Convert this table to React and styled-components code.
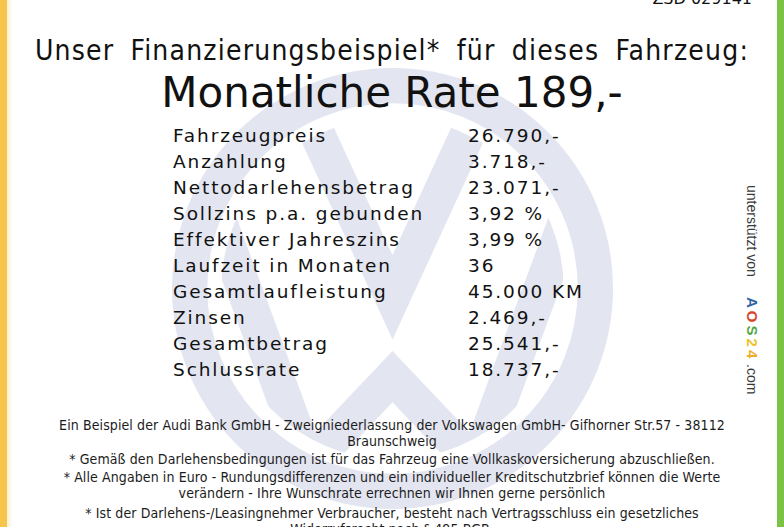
import React from "react";
import styled, { createGlobalStyle } from "styled-components";

const GlobalStyle = createGlobalStyle`
  html, body {
    margin: 0;
    padding: 0;
    background: #fff;
  }
  body {
    font-family: "DejaVu Sans", "Liberation Sans", sans-serif;
    color: #111;
  }
`;

const Page = styled.div`
  position: relative;
  width: 784px;
  height: 527px;
  overflow: hidden;
  display: flex;
  background: #fff;
`;

const Edge = styled.div`
  flex: 0 0 7px;
  background: ${(p) => p.color};
  z-index: 2;
`;

const Main = styled.main`
  position: relative;
  z-index: 1;
  flex: 1;
  display: flex;
  flex-direction: column;
  align-items: center;
  margin-top: -11px;
  background: linear-gradient(90deg, rgba(250, 232, 180, 0.6) 0px, rgba(255, 255, 255, 0) 6px);
`;

const RefNo = styled.div`
  align-self: flex-end;
  margin-right: 25px;
  font-size: 16px;
  line-height: 20px;
`;

const Headline = styled.h1`
  margin: 26px 0 0;
  font-family: "DejaVu Sans Condensed", "DejaVu Sans", sans-serif;
  font-stretch: condensed;
  font-weight: normal;
  font-size: 28px;
  line-height: 32px;
  letter-spacing: 1.2px;
  word-spacing: 7px;
  white-space: nowrap;
`;

const Rate = styled.h2`
  margin: 2px 0 0;
  font-weight: normal;
  font-size: 42px;
  line-height: 48px;
  white-space: nowrap;
`;

const Table = styled.dl`
  margin: 6px 0 0;
  width: 438px;
  display: grid;
  grid-template-columns: 295px 1fr;
  font-size: 18.5px;
  line-height: 26px;
  letter-spacing: 1.9px;
  white-space: nowrap;

  dt, dd {
    margin: 0;
  }
`;

const Footer = styled.footer`
  margin-top: 34px;
  width: 740px;
  font-family: "DejaVu Sans Condensed", "DejaVu Sans", sans-serif;
  font-stretch: condensed;
  font-size: 14px;
  line-height: 16px;
  letter-spacing: 0.1px;
  color: #1c1c1c;
  text-align: center;
  white-space: nowrap;
`;

const Note = styled.p`
  margin: 0 0 ${(p) => p.gap || 2}px;
`;

const Watermark = styled.svg`
  position: absolute;
  left: 172px;
  top: 68px;
  width: 441px;
  height: 441px;
  z-index: 0;
`;

const Credit = styled.div`
  position: absolute;
  top: 185px;
  left: 744px;
  z-index: 2;
  writing-mode: vertical-rl;
  font-family: "Liberation Sans", Arial, sans-serif;
  font-size: 14px;
  line-height: 16px;
  color: #3a3a3a;
  white-space: nowrap;
`;

const Brand = styled.span`
  margin-inline: 20px 3px;
  font-weight: bold;
  font-size: 15px;
  letter-spacing: 3px;
`;

const BrandLetter = styled.span`
  color: ${(p) => p.color};
`;

const rows = [
  ["Fahrzeugpreis", "26.790,-"],
  ["Anzahlung", "3.718,-"],
  ["Nettodarlehensbetrag", "23.071,-"],
  ["Sollzins p.a. gebunden", "3,92 %"],
  ["Effektiver Jahreszins", "3,99 %"],
  ["Laufzeit in Monaten", "36"],
  ["Gesamtlaufleistung", "45.000 KM"],
  ["Zinsen", "2.469,-"],
  ["Gesamtbetrag", "25.541,-"],
  ["Schlussrate", "18.737,-"],
];

const brand = [
  ["A", "#2f63a6"],
  ["O", "#d9442c"],
  ["S", "#55a646"],
  ["2", "#eec12a"],
  ["4", "#eeae2a"],
];

function VwLogo() {
  const tone = "#e3e5f0";
  return (
    <Watermark viewBox="0 0 100 100">
      <defs>
        <clipPath id="inner">
          <circle cx="50" cy="50" r="38.8" />
        </clipPath>
      </defs>
      <circle cx="50" cy="50" r="46" fill="none" stroke={tone} strokeWidth="8" />
      <g clipPath="url(#inner)" fill="none" stroke={tone} strokeWidth="8" strokeLinejoin="miter" strokeMiterlimit="10">
        <polyline points="27,2 50,52 73,2" />
        <polyline points="6,22 31,90 50,70 69,90 94,22" />
      </g>
    </Watermark>
  );
}

export default function App() {
  return (
    <>
      <GlobalStyle />
      <Page>
        <Edge color="#f6c64c" />
        <VwLogo />
        <Main>
          <RefNo>ZSD 029141</RefNo>
          <Headline>Unser Finanzierungsbeispiel* für dieses Fahrzeug:</Headline>
          <Rate>Monatliche Rate 189,-</Rate>
          <Table>
            {rows.map(([label, value]) => (
              <React.Fragment key={label}>
                <dt>{label}</dt>
                <dd>{value}</dd>
              </React.Fragment>
            ))}
          </Table>
          <Footer>
            <Note>
              Ein Beispiel der Audi Bank GmbH - Zweigniederlassung der Volkswagen GmbH- Gifhorner Str.57 - 38112
              <br />
              Braunschweig
            </Note>
            <Note>* Gemäß den Darlehensbedingungen ist für das Fahrzeug eine Vollkaskoversicherung abzuschließen.</Note>
            <Note gap={4}>
              * Alle Angaben in Euro - Rundungsdifferenzen und ein individueller Kreditschutzbrief können die Werte
              <br />
              verändern - Ihre Wunschrate errechnen wir Ihnen gerne persönlich
            </Note>
            <Note>
              * Ist der Darlehens-/Leasingnehmer Verbraucher, besteht nach Vertragsschluss ein gesetzliches
              <br />
              Widerrufsrecht nach § 495 BGB.
            </Note>
          </Footer>
        </Main>
        <Credit>
          unterstützt von
          <Brand>
            {brand.map(([ch, c]) => (
              <BrandLetter key={ch} color={c}>
                {ch}
              </BrandLetter>
            ))}
          </Brand>
          .com
        </Credit>
        <Edge color="#7cc244" />
      </Page>
    </>
  );
}
